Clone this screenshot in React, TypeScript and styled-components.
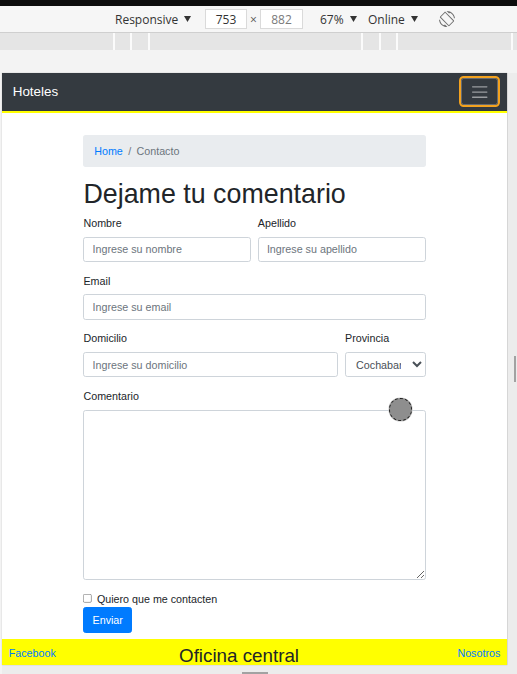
import React from "react";
import styled, { createGlobalStyle } from "styled-components";

const GlobalStyle = createGlobalStyle`
  html, body { margin: 0; padding: 0; }
  body {
    width: 517px;
    height: 674px;
    overflow: hidden;
    background: #f3f3f3;
    font-family: "Open Sans", "Liberation Sans", sans-serif;
  }
  * { box-sizing: border-box; }
`;

/* ---------- devtools chrome ---------- */
const Shell = styled.div`
  display: flex;
  flex-direction: column;
  width: 517px;
  height: 674px;
  overflow: hidden;
`;

const TopStrip = styled.div`
  flex-shrink: 0;
  height: 6px;
  background: #0d0d0d;
`;

const Toolbar = styled.div`
  flex-shrink: 0;
  height: 27px;
  padding-left: 115px;
  display: flex;
  align-items: center;
  background: #f6f6f6;
  border-bottom: 1px solid #cfcfcf;
  font-size: 12px;
  color: #333;
`;

const ToolItem = styled.div<{ $w: number; $justify?: string }>`
  width: ${(p) => p.$w}px;
  flex-shrink: 0;
  display: flex;
  align-items: center;
  justify-content: ${(p) => p.$justify ?? "flex-start"};
  gap: 6px;
  white-space: nowrap;
`;

const SizeBox = styled.div<{ $w: number; $dim?: boolean }>`
  width: ${(p) => p.$w}px;
  height: 20px;
  flex-shrink: 0;
  display: flex;
  align-items: center;
  justify-content: center;
  background: #fff;
  border: 1px solid #dadada;
  color: ${(p) => (p.$dim ? "#7a7a7a" : "#333")};
`;

const Times = styled.div`
  width: 13px;
  flex-shrink: 0;
  text-align: center;
  color: #555;
`;

const Ruler = styled.div`
  flex-shrink: 0;
  height: 17px;
  display: flex;
  gap: 2px;
  background: #fbfbfb;
`;

const RulerSeg = styled.div<{ $w?: number }>`
  background: #e5e5e5;
  ${(p) => (p.$w ? `width: ${p.$w}px; flex-shrink: 0;` : "flex: 1;")}
`;

const Stage = styled.div`
  flex: 1;
  display: grid;
  grid-template-columns: 505px 10px;
  grid-template-rows: 591.6px 10px;
  padding: 23px 0 0 2px;
  background: #f3f3f3;
`;

const Viewport = styled.div`
  position: relative;
  overflow: hidden;
  background: #fff;
  box-shadow: 0 0 1px rgba(0, 0, 0, 0.25);
`;

const SideResizer = styled.div`
  display: flex;
  align-items: center;
  justify-content: flex-end;
  padding-right: 1px;
  background: #ececec;
  border-left: 1px solid #e0e0e0;
`;

const BottomResizer = styled.div`
  display: flex;
  justify-content: center;
  padding-top: 7px;
  background: #ececec;
`;

const Corner = styled.div`
  background: #ececec;
`;

const Handle = styled.div<{ $w: number; $h: number }>`
  width: ${(p) => p.$w}px;
  height: ${(p) => p.$h}px;
  background: #a2a2a2;
`;

const TouchCursor = styled.div`
  position: absolute;
  left: 387.3px;
  top: 325.3px;
  width: 22.4px;
  height: 22.4px;
  border-radius: 50%;
  background: #8e8e8e;
  border: 1.5px dashed #1e1e1e;
  box-shadow: 0 0 0 0.6px #d0d0d0;
`;

/* ---------- emulated page (Bootstrap 4 at 67%) ---------- */
const Page = styled.div`
  zoom: 0.6707;
  width: 753px;
  height: 882px;
  font-family: "Liberation Sans", Arial, sans-serif;
  font-size: 16px;
  line-height: 1.5;
  color: #212529;
  background: #fff;
`;

const Navbar = styled.nav`
  display: flex;
  align-items: center;
  justify-content: space-between;
  padding: 8px 13px 8px 16px;
  background: #343a40;
  border-bottom: 3px solid #ffff00;
`;

const Brand = styled.a`
  padding: 5px 0;
  font-size: 20px;
  line-height: 30px;
  color: #fff;
  text-decoration: none;
`;

const Toggler = styled.button`
  width: 56px;
  height: 40px;
  padding: 4px 12px;
  display: flex;
  align-items: center;
  justify-content: center;
  background: transparent;
  border: 1px solid rgba(255, 255, 255, 0.25);
  border-radius: 4px;
  outline: 3px solid #f3a21f;
  outline-offset: 0;
`;

const Container = styled.div`
  width: 540px;
  margin: 0 auto;
  padding: 0 15px;
`;

const Breadcrumb = styled.ol`
  display: flex;
  list-style: none;
  margin: 33px 0 16px;
  padding: 12px 16px;
  background: #e9ecef;
  border-radius: 4px;
`;

const CrumbLink = styled.a`
  color: #007bff;
  text-decoration: none;
`;

const CrumbDivider = styled.span`
  padding: 0 8px;
  color: #6c757d;
`;

const CrumbActive = styled.li`
  color: #6c757d;
`;

const Title = styled.h1`
  margin: 0 0 8px;
  font-size: 40px;
  font-weight: 500;
  line-height: 1.2;
`;

const FormRow = styled.div`
  display: flex;
  margin: 0 -5px;
`;

const Col = styled.div<{ $span: number }>`
  flex: 0 0 ${(p) => (p.$span / 12) * 100}%;
  max-width: ${(p) => (p.$span / 12) * 100}%;
  padding: 0 5px;
`;

const FormGroup = styled.div`
  margin-bottom: 16px;
`;

const Label = styled.label`
  display: inline-block;
  margin-bottom: 8px;
`;

const controlCss = `
  display: block;
  width: 100%;
  padding: 6px 12px;
  font-family: inherit;
  font-size: 16px;
  line-height: 1.5;
  color: #495057;
  background: #fff;
  border: 1px solid #ced4da;
  border-radius: 4px;
  margin: 0;
  &::placeholder { color: #6c757d; opacity: 1; }
`;

const Input = styled.input`
  ${controlCss}
  height: 38px;
`;

const Select = styled.select`
  ${controlCss}
  height: 38px;
`;

const TextArea = styled.textarea`
  ${controlCss}
  height: auto;
  resize: vertical;
`;

const FormCheck = styled.div`
  display: flex;
  align-items: flex-start;
`;

const CheckBox = styled.input`
  width: 13px;
  height: 13px;
  margin: 4.8px 7px 0 0;
  flex-shrink: 0;
`;

const SubmitButton = styled.button`
  display: inline-block;
  padding: 6px 12px;
  font-family: inherit;
  font-size: 16px;
  line-height: 1.5;
  color: #fff;
  background: #007bff;
  border: 1px solid #007bff;
  border-radius: 4px;
`;

const Footer = styled.footer`
  margin-top: 8px;
  display: grid;
  grid-template-columns: 254px 1fr auto;
  align-items: start;
  padding: 9px 10px 0;
  height: 60px;
  background: #ffff00;
`;

const FooterLink = styled.a`
  color: #007bff;
  text-decoration: none;
  line-height: 24px;
`;

const FooterTitle = styled.h3`
  margin: 0;
  font-size: 28px;
  font-weight: 500;
  line-height: 1.2;
`;

const Caret = () => (
  <svg width="7" height="6" viewBox="0 0 7 6">
    <polygon points="0,0 7,0 3.5,6" fill="#333" />
  </svg>
);

const RotateIcon = () => (
  <svg width="16" height="16" viewBox="0 0 24 24">
    <path
      fill="#6e6e6e"
      d="M16.48 2.52c3.27 1.55 5.61 4.72 5.97 8.48h1.5C23.44 4.84 18.29 0 12 0l-.66.03 3.81 3.81 1.33-1.32zm-6.250-.77c-.59-.59-1.54-.59-2.12 0L1.75 8.11c-.59.59-.59 1.54 0 2.12l12.02 12.02c.59.59 1.54.59 2.12 0l6.36-6.36c.59-.59.59-1.54 0-2.12L10.23 1.75zm4.6 19.44L2.81 9.17l6.36-6.36 12.02 12.02-6.36 6.36zm-7.31.29C4.25 19.94 1.91 16.76 1.55 13H.05C.56 19.16 5.71 24 12 24l.66-.03-3.81-3.81-1.33 1.32z"
    />
  </svg>
);

const HamburgerIcon = () => (
  <svg width="30" height="30" viewBox="0 0 30 30">
    <path
      stroke="rgba(255,255,255,0.5)"
      strokeWidth="2"
      strokeLinecap="round"
      strokeMiterlimit="10"
      d="M4 7h22M4 15h22M4 23h22"
    />
  </svg>
);

const rulerSegments = [113, 15, 16, 211, 16, 15, 113, 0];

export default function App() {
  return (
    <>
      <GlobalStyle />
      <Shell>
        <TopStrip />
        <Toolbar>
          <ToolItem $w={90}>
            Responsive <Caret />
          </ToolItem>
          <SizeBox $w={42}>753</SizeBox>
          <Times>×</Times>
          <SizeBox $w={43} $dim>
            882
          </SizeBox>
          <ToolItem $w={17} />
          <ToolItem $w={48}>
            67% <Caret />
          </ToolItem>
          <ToolItem $w={71}>
            Online <Caret />
          </ToolItem>
          <ToolItem $w={16}>
            <RotateIcon />
          </ToolItem>
        </Toolbar>
        <Ruler>
          {rulerSegments.map((w, i) => (
            <RulerSeg key={i} $w={w || undefined} />
          ))}
        </Ruler>
        <Stage>
          <Viewport>
            <Page>
              <Navbar>
                <Brand href="#">Hoteles</Brand>
                <Toggler type="button" aria-label="Toggle navigation">
                  <HamburgerIcon />
                </Toggler>
              </Navbar>
              <Container>
                <Breadcrumb>
                  <li>
                    <CrumbLink href="#">Home</CrumbLink>
                  </li>
                  <CrumbDivider>/</CrumbDivider>
                  <CrumbActive>Contacto</CrumbActive>
                </Breadcrumb>
                <Title>Dejame tu comentario</Title>
                <form onSubmit={(e) => e.preventDefault()}>
                  <FormRow>
                    <Col $span={6}>
                      <FormGroup>
                        <Label>Nombre</Label>
                        <Input placeholder="Ingrese su nombre" />
                      </FormGroup>
                    </Col>
                    <Col $span={6}>
                      <FormGroup>
                        <Label>Apellido</Label>
                        <Input placeholder="Ingrese su apellido" />
                      </FormGroup>
                    </Col>
                  </FormRow>
                  <FormGroup>
                    <Label>Email</Label>
                    <Input type="email" placeholder="Ingrese su email" />
                  </FormGroup>
                  <FormRow>
                    <Col $span={9}>
                      <FormGroup>
                        <Label>Domicilio</Label>
                        <Input placeholder="Ingrese su domicilio" />
                      </FormGroup>
                    </Col>
                    <Col $span={3}>
                      <FormGroup>
                        <Label>Provincia</Label>
                        <Select defaultValue="Cochabamba">
                          <option>Cochabamba</option>
                          <option>La Paz</option>
                          <option>Santa Cruz</option>
                        </Select>
                      </FormGroup>
                    </Col>
                  </FormRow>
                  <FormGroup>
                    <Label>Comentario</Label>
                    <TextArea rows={10} />
                  </FormGroup>
                  <FormCheck>
                    <CheckBox type="checkbox" id="contact" />
                    <label htmlFor="contact">Quiero que me contacten</label>
                  </FormCheck>
                  <SubmitButton type="submit">Enviar</SubmitButton>
                </form>
              </Container>
              <Footer>
                <div>
                  <FooterLink href="#">Facebook</FooterLink>
                </div>
                <FooterTitle>Oficina central</FooterTitle>
                <FooterLink href="#">Nosotros</FooterLink>
              </Footer>
            </Page>
            <TouchCursor />
          </Viewport>
          <SideResizer>
            <Handle $w={2.4} $h={26} />
          </SideResizer>
          <BottomResizer>
            <Handle $w={26} $h={3} />
          </BottomResizer>
          <Corner />
        </Stage>
      </Shell>
    </>
  );
}
